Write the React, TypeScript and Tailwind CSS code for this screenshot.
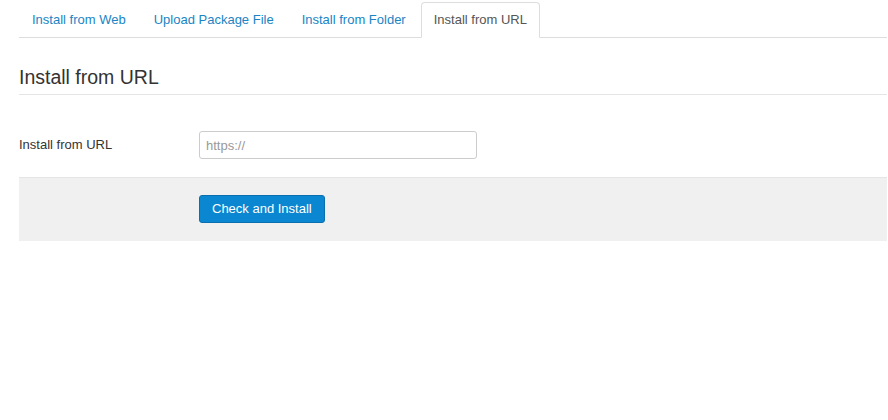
const tabs = [
  "Install from Web",
  "Upload Package File",
  "Install from Folder",
  "Install from URL",
];

export default function App() {
  const active = 3;

  return (
    <div
      className="min-h-[420px] bg-white pl-[19px] pr-px text-[13px] text-[#333]"
      style={{ fontFamily: '"Liberation Sans", Arial, sans-serif' }}
    >
      <ul className="flex border-b border-[#ddd] pt-[2px]">
        {tabs.map((tab, index) => (
          <li key={tab} className="-mb-px mr-[2px]">
            <a
              className={`block h-[36px] rounded-t-[4px] border px-[12px] leading-[34px] ${
                index === active
                  ? "border-[#ddd] border-b-white bg-white text-[#555]"
                  : "border-transparent text-[#1a84c5]"
              }`}
            >
              {tab}
            </a>
          </li>
        ))}
      </ul>

      <h2 className="mt-[26px] border-b border-[#e5e5e5] pb-[4px] text-[19.5px] leading-[26px] text-[#333]">
        Install from URL
      </h2>

      <div className="mt-[36px] flex items-center">
        <label className="w-[180px] text-[13px]">Install from URL</label>
        <input
          type="text"
          placeholder="https://"
          className="h-[28px] w-[278px] rounded-[3px] border border-[#ccc] px-[6px] text-[13px] outline-none placeholder:text-[#999]"
        />
      </div>

      <div className="mt-[18px] h-[64px] border-t border-[#e5e5e5] bg-[#f0f0f0] pl-[180px] pt-[17px]">
        <button className="h-[28px] rounded-[3px] border border-[#0a6fae] bg-[#0a87d0] px-[12px] text-[13px] text-white">
          Check and Install
        </button>
      </div>
    </div>
  );
}
